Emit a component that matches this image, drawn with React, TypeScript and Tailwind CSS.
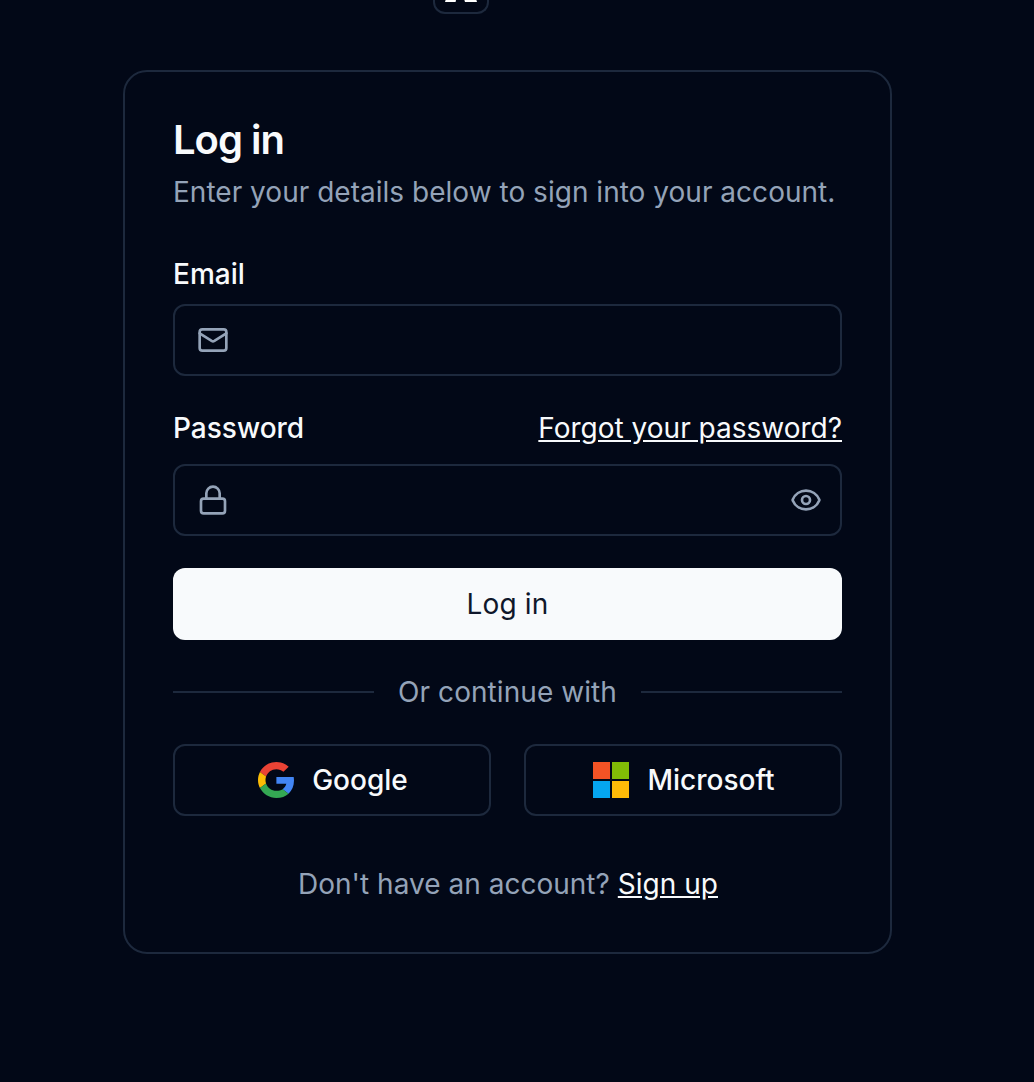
import { Eye, Lock, Mail } from "lucide-react";

function GoogleLogo() {
  return (
    <svg className="size-9 shrink-0" viewBox="0 0 47 48" preserveAspectRatio="none" aria-hidden="true">
      <path fill="#EA4335" d="M24 9.5c3.54 0 6.71 1.22 9.21 3.6l6.85-6.85C35.9 2.38 30.47 0 24 0 14.62 0 6.51 5.38 2.56 13.22l7.98 6.19C12.43 13.72 17.74 9.5 24 9.5z" />
      <path fill="#4285F4" d="M46.98 24.55c0-1.57-.15-3.09-.38-4.55H24v9.02h12.94c-.58 2.96-2.26 5.48-4.78 7.18l7.73 6c4.51-4.18 7.09-10.36 7.09-17.65z" />
      <path fill="#FBBC05" d="M10.53 28.59c-.48-1.45-.76-2.99-.76-4.59s.27-3.14.76-4.59l-7.98-6.19C.92 16.46 0 20.12 0 24c0 3.88.92 7.54 2.56 10.78l7.97-6.19z" />
      <path fill="#34A853" d="M24 48c6.48 0 11.93-2.13 15.89-5.81l-7.73-6c-2.15 1.45-4.92 2.3-8.16 2.3-6.26 0-11.57-4.22-13.47-9.91l-7.98 6.19C6.51 42.62 14.62 48 24 48z" />
    </svg>
  );
}

function MicrosoftLogo() {
  return (
    <svg className="size-9 shrink-0" viewBox="0 0 36 36" aria-hidden="true">
      <path fill="#F35325" d="M0 0h17v17H0z" />
      <path fill="#81BC06" d="M19 0h17v17H19z" />
      <path fill="#05A6F0" d="M0 19h17v17H0z" />
      <path fill="#FFBA08" d="M19 19h17v17H19z" />
    </svg>
  );
}

const field = "flex h-18 items-center rounded-xl border-2 border-slate-800 pr-[18px] pl-[22px] text-[#94a3b8]";
const provider =
  "flex h-18 flex-1 items-center justify-center gap-[18px] rounded-xl border-2 border-slate-800 pl-0.5 font-medium";

export default function App() {
  return (
    <div className="h-[1082px] overflow-hidden bg-[#020817] font-['Inter',sans-serif] text-[28px] leading-10 text-[#f8fafc]">
      <header className="ml-[433px] flex h-3.5 w-14 items-start justify-center rounded-b-xl border-2 border-t-0 border-slate-800">
        <svg className="h-0.5 w-9" viewBox="0 0 36 2" fill="#fff" aria-hidden="true">
          <path d="M2.6 0H13l-.4 2H2zM21.4 0h12l.6 2H22z" />
        </svg>
      </header>
      <main className="mt-14 ml-[123px] flex h-[884px] w-[769px] flex-col rounded-3xl border-2 border-slate-800 px-12 pt-12">
        <h1 className="text-[40px] leading-10 font-semibold tracking-[-0.025em]">Log in</h1>
        <p className="mt-3 tracking-[0.02px] text-[#94a3b8]">Enter your details below to sign into your account.</p>
        <form className="flex flex-col" onSubmit={(e) => e.preventDefault()}>
          <label className="mt-[42px] font-medium">Email</label>
          <div className="mt-2.5 flex flex-col">
            <div className={field}>
              <Mail size={32} />
              <input type="email" aria-label="Email" className="min-w-0 flex-1 bg-transparent px-4 outline-none" />
            </div>
          </div>
          <div className="mt-8 flex justify-between">
            <label className="font-medium">Password</label>
            <a href="#" className="underline underline-offset-2">Forgot your password?</a>
          </div>
          <div className="mt-4 flex flex-col">
            <div className={field}>
              <Lock size={32} />
              <input type="password" aria-label="Password" className="min-w-0 flex-1 bg-transparent px-4 outline-none" />
              <Eye size={32} />
            </div>
          </div>
          <button className="mt-8 h-18 rounded-xl bg-[#f8fafc] tracking-[0.15px] text-[#0f172a]">Log in</button>
        </form>
        <div className="mt-8 flex items-center gap-6 text-[#94a3b8]">
          <span className="h-0.5 flex-1 bg-slate-800" />
          <span className="w-[219px] text-center tracking-[0.06px] whitespace-nowrap">Or continue with</span>
          <span className="h-0.5 flex-1 bg-slate-800" />
        </div>
        <div className="mt-8 flex gap-[33px]">
          <button className={provider}>
            <GoogleLogo />
            Google
          </button>
          <button className={provider}>
            <MicrosoftLogo />
            Microsoft
          </button>
        </div>
        <p className="mt-12 pl-px text-center tracking-[0.02px] text-[#94a3b8]">
          Don't have an account?{" "}
          <a href="#" className="text-[#f8fafc] underline underline-offset-2">Sign up</a>
        </p>
      </main>
    </div>
  );
}
